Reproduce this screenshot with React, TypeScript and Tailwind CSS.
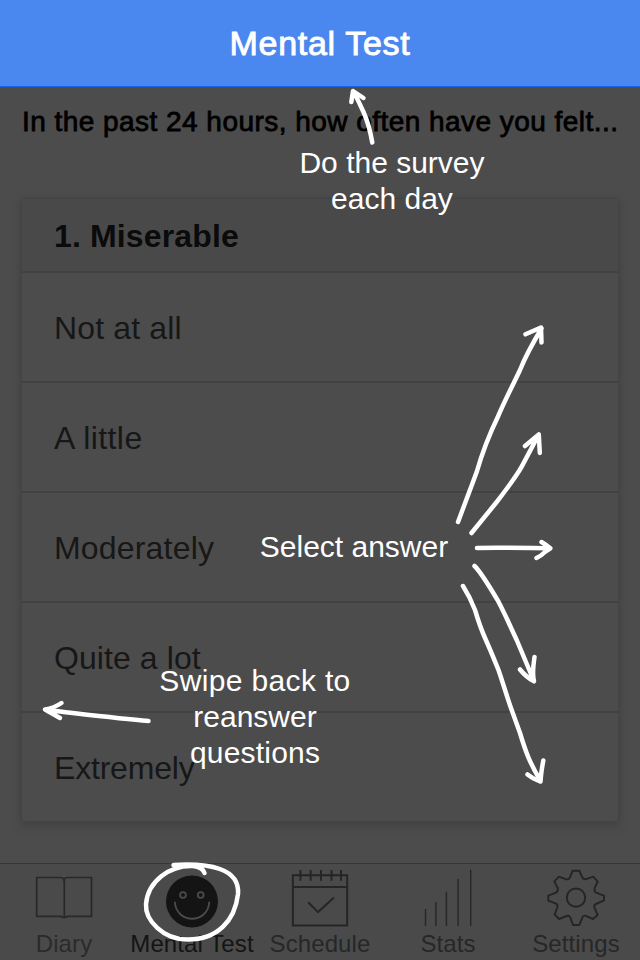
import React from "react";

const answers = [
  { label: "Not at all", spacing: "tracking-[0.15px]" },
  { label: "A little", spacing: "tracking-[0.4px]" },
  { label: "Moderately", spacing: "tracking-[0.18px]" },
  { label: "Quite a lot", spacing: "tracking-[0.08px]" },
  { label: "Extremely", spacing: "tracking-[-0.2px]" },
];

function BookIcon() {
  return (
    <svg width="64" height="60" viewBox="0 0 64 60" fill="none" stroke="#282828" strokeWidth="1.7" strokeLinejoin="round">
      <path d="M4.700 14.500h23q4.300 0 4.300 3.200q0-3.200 4.300-3.200h23.200v38.900H36.200q-2 0-2.400.9h-3.400q-.4-.9-2.400-.9H4.700zM32.300 17v37" />
    </svg>
  );
}

function SmileIcon() {
  return (
    <svg width="64" height="60" viewBox="0 0 64 60" fill="none">
      <circle cx="32" cy="38.400" r="26" fill="#141414" />
      <g stroke="#4b4b4b" strokeWidth="1.8">
        <circle cx="23" cy="32" r="2.900" />
        <circle cx="40.700" cy="32" r="2.900" />
        <path d="M14.800 38.800c1.400 22.600 33.300 22.600 34.500 0" />
      </g>
    </svg>
  );
}

function CalendarIcon() {
  return (
    <svg width="64" height="60" viewBox="0 0 64 60" fill="none" stroke="#252525" strokeWidth="2">
      <path d="M4.900 12.200h54.300v50.200H4.900zM4.900 24h54.300M12.400 7v10.700M22.600 7v10.700M33 7v10.700M43.500 7v10.700M53 7v10.700" />
      <path d="M20.200 39.200l9.800 9.900 16-14.500" />
    </svg>
  );
}

function StatsIcon() {
  return (
    <svg width="64" height="60" viewBox="0 0 64 60" fill="none" stroke="#272727" strokeWidth="1.400">
      <path d="M9.500 46v17M19.900 39v24M30.400 28.700V63M42.100 16v47M54.700 6.800V63" />
    </svg>
  );
}

function GearIcon() {
  return (
    <svg width="64" height="60" viewBox="0 0 64 60" fill="none" stroke="#252525" strokeLinejoin="round">
      <g strokeWidth="5.8" transform="translate(-84 -8) scale(0.33333)">
        <circle cx="348" cy="128" r="27.500" />
        <path d="M338 47L358 47L366 66Q369 73 376 73L400 65L413 80L404 99Q401 108 408 113L432 122V136L408 147Q401 150 403 157L413 180L399 192L376 182Q369 181 367 188L358 210H339L331 188Q328 181 320 183L297 192L284 178L292 157Q294 149 288 146L265 137V122L288 113Q296 108 293 99L283 79L297 65L319 73Q327 74 330 67Z" />
      </g>
    </svg>
  );
}

const tabs = [
  { label: "Diary", icon: <BookIcon />, color: "text-[#2b2b2b]" },
  { label: "Mental Test", icon: <SmileIcon />, color: "text-[#141414]" },
  { label: "Schedule", icon: <CalendarIcon />, color: "text-[#272727]" },
  { label: "Stats", icon: <StatsIcon />, color: "text-[#272727]" },
  { label: "Settings", icon: <GearIcon />, color: "text-[#272727]" },
];

function Hints() {
  return (
    <div className="pointer-events-none absolute inset-0 text-center text-[30px] leading-[36px] text-white">
      <svg className="absolute inset-0" width="640" height="960" viewBox="0 0 640 960" fill="none" stroke="#fff" strokeWidth="4.5" strokeLinecap="round" strokeLinejoin="round">
        <path d="M372.300 142.500Q369 124 363.500 112Q359 102 353.500 91.500M351.300 102L353 91L363.500 98" />
        <path d="M458 522L476.700 472C483 450 490 433 498 416.500C506 398 513 385 520 370C526 355 531 346 541.500 328.500M525.500 334.300L541 327.500L541.500 342.500" />
        <path d="M471.500 533L496.700 502C509 486 516 477 521.700 466.700L538.500 435M525 446L538.800 434.500L539.800 453" />
        <path d="M477 548C500 547.500 522 548 550 548.300M541.500 542Q545 544 550.300 548.300L545 552Q541 556 536.500 558" />
        <path d="M474.500 566C480 571 491 589 498.500 601.700C506 616 511 628 516.700 640L533.500 680M520 669.500Q526 677 534 681.300Q532 674 534.500 657" />
        <path d="M463 586Q470 597 475 610C478 620 481 629 485 638C490 649 494 659 498.500 670C503 683 507 697 511.700 710L520 733C526 753 530 763 540 780M527.500 774.500Q533 779 540.500 781.500Q541 773 543.300 760.500" />
        <path d="M148.500 721C118 718.500 82 714 46 710M61.500 703Q54 708 45 709.500L60 718" />
        <path d="M173.500 865C209 863 240 868 238 894C235 921 217 939.500 188 939.500C163 940 145 920 146 904C148 881 170 865 193 866C200 867 203.500 869 204.500 873" />
      </svg>
      <p className="absolute left-[292px] top-[145px] w-[200px]">Do the survey<br />each day</p>
      <p className="absolute left-[254px] top-[529px] w-[200px]">Select answer</p>
      <p className="absolute left-[145px] top-[663px] w-[220px]"><span className="tracking-[0.35px]">Swipe back to</span><br />reanswer<br /><span className="tracking-[0.2px]">questions</span></p>
    </div>
  );
}

export default function App() {
  return (
    <div className="relative flex h-[960px] w-[640px] flex-col overflow-hidden bg-[#4c4c4c] font-['Liberation_Sans',Arial,sans-serif]">
      <header className="flex h-[87px] shrink-0 items-center justify-center border-b border-[#1761e5] bg-[#4a88ef]">
        <h1 className="text-[34px] leading-none tracking-[0.7px] text-white [-webkit-text-stroke:0.9px_#fff]">Mental Test</h1>
      </header>
      <main className="flex-1 px-[22px]">
        <p className="h-[112px] whitespace-nowrap pt-[18px] text-[28px] leading-[34px] tracking-[0.46px] text-black [-webkit-text-stroke:0.8px_#000]">
          In the past 24 hours, how often have you felt...
        </p>
        <section className="h-[622px] overflow-visible rounded-[3px] bg-[#4c4c4c] shadow-[0_0_0_1.5px_#444,0_3px_9px_1px_#404040]">
          <h2 className="h-[74px] border-b-2 border-[#424242] bg-[#494949] px-8 text-[32px] font-bold leading-[75px] tracking-[0.15px] text-[#0b0b0b]">1. Miserable</h2>
          <ul>
            {answers.map((a) => (
              <li key={a.label} className={"h-[110px] border-b-2 border-[#424242] px-8 text-[32px] leading-[111px] text-[#171717] last:h-[108px] last:border-b-0 " + a.spacing}>
                {a.label}
              </li>
            ))}
          </ul>
        </section>
      </main>
      <nav className="grid h-[97px] shrink-0 grid-cols-5 border-t border-[#363636] bg-[#4a4a4a]">
        {tabs.map((t) => (
          <div key={t.label} className={"flex flex-col items-center " + t.color}>
            <div className="h-[65px] [&>svg]:-translate-y-px [&>svg]:overflow-visible">{t.icon}</div>
            <span className="whitespace-nowrap text-[24px] leading-[30px] tracking-[0.1px]">{t.label}</span>
          </div>
        ))}
      </nav>
      <Hints />
    </div>
  );
}
